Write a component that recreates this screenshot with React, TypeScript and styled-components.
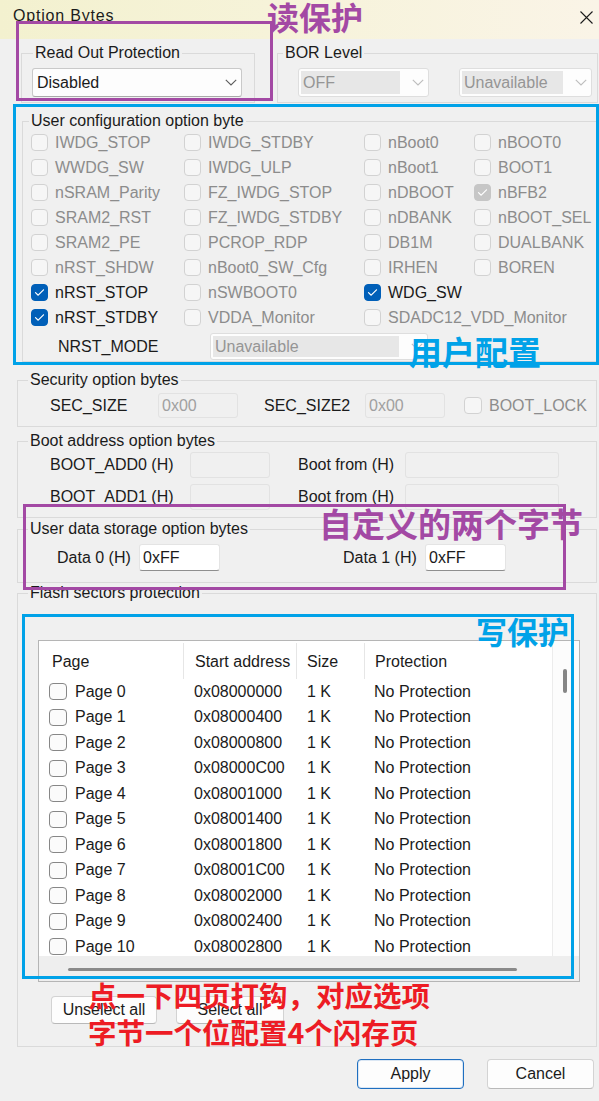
import React from 'react'
import styled, { createGlobalStyle } from 'styled-components'

const PURPLE = '#a349a4'
const BLUE = '#00a2e8'
const RED = '#ed1c24'

const GlobalStyle = createGlobalStyle`
  * { box-sizing: border-box; }
  html, body { margin: 0; padding: 0; background: #f0f0f0; }
  body {
    font-family: "Liberation Sans", Arial, sans-serif;
    font-size: 16px;
    color: #1b1b1b;
  }
`

const Window = styled.div`
  position: relative;
  width: 599px;
  height: 1101px;
  overflow: hidden;
  background: #f0f0f0;
`

const TitleBar = styled.header`
  display: flex;
  align-items: flex-start;
  justify-content: space-between;
  height: 39px;
  padding: 7px 6px 0 13px;
  background: linear-gradient(90deg, #f3f1cf 0%, #f6f3d9 45%, #faf4e7 100%);
`

const Title = styled.span`
  line-height: 18px;
  letter-spacing: 0.8px;
`

const CloseIcon = styled.svg`
  margin-top: 4px;
  width: 13px;
  height: 13px;
`

const Body = styled.main`
  display: flex;
  flex-direction: column;
  padding: 5px 2px 0 17px;
`

const TopRow = styled.div`
  display: flex;
  gap: 22px;
  padding-left: 4px;
`

const Group = styled.fieldset<{ $w?: number; $mt?: number; $ml?: number; $pb: number }>`
  flex: none;
  width: ${p => (p.$w ? `${p.$w}px` : 'auto')};
  min-width: 0;
  margin: ${p => p.$mt ?? 0}px 0 0 ${p => p.$ml ?? 0}px;
  padding: 0 0 ${p => p.$pb}px;
  border: 1px solid #dadada;
`

const Legend = styled.legend<{ $lx: number }>`
  margin-left: ${p => p.$lx}px;
  padding: 0 2px;
  line-height: 18px;
`

const ComboRow = styled.div<{ $pl: number; $gap?: number }>`
  display: flex;
  gap: ${p => p.$gap ?? 0}px;
  margin-top: 6px;
  padding-left: ${p => p.$pl}px;
`

const Combo = styled.div<{ $w: number; $h?: number; $dim?: boolean }>`
  flex: none;
  display: flex;
  align-items: stretch;
  width: ${p => p.$w}px;
  height: ${p => p.$h ?? 29}px;
  padding: 2px 4px 2px 2px;
  border: 1px solid ${p => (p.$dim ? '#dedede' : '#c9c9c9')};
  border-bottom-color: ${p => (p.$dim ? '#dedede' : '#a9a9a9')};
  border-radius: 3px;
  background: #fdfdfd;
`

const ComboText = styled.span<{ $dim?: boolean }>`
  flex: 1;
  display: flex;
  align-items: center;
  padding-left: 2px;
  background: ${p => (p.$dim ? '#e7e7e7' : 'transparent')};
  color: ${p => (p.$dim ? '#959595' : '#1b1b1b')};
  white-space: nowrap;
  overflow: hidden;
`

const Chevron = styled.svg<{ $dim?: boolean }>`
  flex: none;
  align-self: center;
  width: 12px;
  height: 7px;
  margin-left: 12px;
  stroke: ${p => (p.$dim ? '#bdbdbd' : '#5c5c5c')};
`

const ConfigGrid = styled.div`
  display: grid;
  grid-template-columns: 153px 180px 110px 1fr;
  grid-auto-rows: 25px;
  padding-left: 8px;
`

const Option = styled.label<{ $dim?: boolean; $ml?: number }>`
  display: flex;
  align-items: center;
  gap: 7px;
  margin-left: ${p => p.$ml ?? 0}px;
  white-space: nowrap;
  color: ${p => (p.$dim ? '#8c8c8c' : '#1b1b1b')};
`

const Box = styled.span<{ $on?: boolean; $dim?: boolean; $wide?: boolean }>`
  flex: none;
  display: inline-flex;
  align-items: center;
  justify-content: center;
  width: ${p => (p.$wide ? 18 : 17)}px;
  height: 17px;
  border-radius: 4px;
  border: 1px solid ${p => (p.$on ? (p.$dim ? '#c6c6c6' : '#005fb8') : p.$dim ? '#d2d2d2' : '#878787')};
  background: ${p => (p.$on ? (p.$dim ? '#c6c6c6' : '#005fb8') : p.$dim ? '#f6f6f6' : '#fbfbfb')};
`

const ModeRow = styled.div`
  display: flex;
  align-items: center;
  margin-top: 3px;
  padding-left: 35px;
`

const FieldRow = styled.div<{ $mt: number; $pl: number }>`
  display: flex;
  align-items: center;
  margin-top: ${p => p.$mt}px;
  padding-left: ${p => p.$pl}px;
`

const FieldLabel = styled.span<{ $w: number; $ml?: number }>`
  flex: none;
  width: ${p => p.$w}px;
  margin-left: ${p => p.$ml ?? 0}px;
  white-space: nowrap;
`

const TextField = styled.div<{ $w: number; $h: number; $dim?: boolean }>`
  flex: none;
  display: flex;
  align-items: center;
  width: ${p => p.$w}px;
  height: ${p => p.$h}px;
  padding-left: 3px;
  border: 1px solid ${p => (p.$dim ? '#e2e2e2' : '#e4e4e4')};
  border-bottom-color: ${p => (p.$dim ? '#e2e2e2' : '#8e8e8e')};
  border-radius: 3px;
  background: ${p => (p.$dim ? '#f0f0f0' : '#ffffff')};
  color: ${p => (p.$dim ? '#a0a0a0' : '#1b1b1b')};
`

const List = styled.div`
  display: flex;
  flex-direction: column;
  width: 542px;
  height: 342px;
  margin: 38px 0 0 20px;
  border: 1px solid #b5b5b5;
  background: #ffffff;
`

const ListMain = styled.div`
  display: flex;
  flex: 1;
  min-height: 0;
`

const Table = styled.div`
  flex: 1;
  overflow: hidden;
`

const HeaderRow = styled.div`
  display: grid;
  grid-template-columns: 145px 113px 68px 1fr;
  height: 38px;
  padding-top: 2px;
`

const HeaderCell = styled.div<{ $pl: number }>`
  padding: 10px 0 0 ${p => p.$pl}px;
  line-height: 18px;
  border-right: 1px solid #e6e6e6;
  white-space: nowrap;

  &:last-child {
    border-right: none;
  }
`

const Row = styled.div`
  display: grid;
  grid-template-columns: 145px 113px 68px 1fr;
  height: 25.5px;
  align-items: center;
`

const Cell = styled.div<{ $pl: number }>`
  display: flex;
  align-items: center;
  gap: 8px;
  padding-left: ${p => p.$pl}px;
  white-space: nowrap;
`

const VScroll = styled.div`
  flex: none;
  width: 27px;
  padding: 28px 0 0 10px;
  background: #fcfcfc;
  border-left: 1px solid #ececec;
`

const VThumb = styled.div`
  width: 4px;
  height: 24px;
  border-radius: 2px;
  background: #868686;
`

const HScroll = styled.div`
  flex: none;
  height: 25px;
  padding: 12px 0 0 29px;
  background: #eeeeee;
`

const HThumb = styled.div`
  width: 449px;
  height: 3px;
  border-radius: 2px;
  background: #8a8a8a;
`

const ButtonRow = styled.div<{ $mt: number; $gap: number; $end?: boolean }>`
  display: flex;
  justify-content: ${p => (p.$end ? 'flex-end' : 'flex-start')};
  gap: ${p => p.$gap}px;
  margin-top: ${p => p.$mt}px;
  padding: ${p => (p.$end ? '0 3px 0 0' : '0 0 0 33px')};
`

const Button = styled.button<{ $w: number; $h: number; $primary?: boolean }>`
  width: ${p => p.$w}px;
  height: ${p => p.$h}px;
  padding: 0;
  font: inherit;
  color: #1b1b1b;
  background: #fdfdfd;
  border: 1px solid ${p => (p.$primary ? '#1f6fc0' : '#d3d3d3')};
  border-bottom-color: ${p => (p.$primary ? '#1f6fc0' : '#b9b9b9')};
  border-radius: 4px;
  box-shadow: ${p => (p.$primary ? 'inset 0 0 0 1px #dbe7f4' : 'none')};
`

const Frame = styled.div<{ $x: number; $y: number; $w: number; $h: number; $color: string }>`
  position: absolute;
  left: ${p => p.$x}px;
  top: ${p => p.$y}px;
  width: ${p => p.$w}px;
  height: ${p => p.$h}px;
  border: 3px solid ${p => p.$color};
  pointer-events: none;
`

const Note = styled.div<{ $x: number; $y: number; $size: number; $lh?: number; $color: string }>`
  position: absolute;
  left: ${p => p.$x}px;
  top: ${p => p.$y}px;
  font-family: "Noto Sans CJK SC", "Liberation Sans", sans-serif;
  font-weight: 700;
  font-size: ${p => p.$size}px;
  line-height: ${p => p.$lh ?? p.$size}px;
  color: ${p => p.$color};
  white-space: nowrap;
  pointer-events: none;
`

type Opt = { label: string; on?: boolean; live?: boolean } | null

const configRows: Opt[][] = [
  [{ label: 'IWDG_STOP' }, { label: 'IWDG_STDBY' }, { label: 'nBoot0' }, { label: 'nBOOT0' }],
  [{ label: 'WWDG_SW' }, { label: 'IWDG_ULP' }, { label: 'nBoot1' }, { label: 'BOOT1' }],
  [{ label: 'nSRAM_Parity' }, { label: 'FZ_IWDG_STOP' }, { label: 'nDBOOT' }, { label: 'nBFB2', on: true }],
  [{ label: 'SRAM2_RST' }, { label: 'FZ_IWDG_STDBY' }, { label: 'nDBANK' }, { label: 'nBOOT_SEL' }],
  [{ label: 'SRAM2_PE' }, { label: 'PCROP_RDP' }, { label: 'DB1M' }, { label: 'DUALBANK' }],
  [{ label: 'nRST_SHDW' }, { label: 'nBoot0_SW_Cfg' }, { label: 'IRHEN' }, { label: 'BOREN' }],
  [{ label: 'nRST_STOP', on: true, live: true }, { label: 'nSWBOOT0' }, { label: 'WDG_SW', on: true, live: true }, null],
  [{ label: 'nRST_STDBY', on: true, live: true }, { label: 'VDDA_Monitor' }, { label: 'SDADC12_VDD_Monitor' }, null],
]

const pages = Array.from({ length: 11 }, (_, i) => ({
  name: `Page ${i}`,
  address: '0x' + (0x08000000 + i * 0x400).toString(16).toUpperCase().padStart(8, '0'),
}))

const Check = ({ on, dim, wide }: { on?: boolean; dim?: boolean; wide?: boolean }) => (
  <Box $on={on} $dim={dim} $wide={wide}>
    {on && (
      <svg width="11" height="9" viewBox="0 0 11 9" fill="none">
        <path d="M1.5 4.6 L4.2 7.2 L9.5 1.8" stroke="#ffffff" strokeWidth="1.2" strokeLinecap="round" strokeLinejoin="round" />
      </svg>
    )}
  </Box>
)

const Select = ({ value, w, h, dim }: { value: string; w: number; h?: number; dim?: boolean }) => (
  <Combo $w={w} $h={h} $dim={dim}>
    <ComboText $dim={dim}>{value}</ComboText>
    <Chevron $dim={dim} viewBox="0 0 12 7" fill="none" strokeWidth="1.1">
      <path d="M0.8 0.8 L6 6 L11.2 0.8" />
    </Chevron>
  </Combo>
)

export default function App() {
  return (
    <Window>
      <GlobalStyle />
      <TitleBar>
        <Title>Option Bytes</Title>
        <CloseIcon viewBox="0 0 13 13" fill="none" stroke="#1b1b1b" strokeWidth="1.1">
          <path d="M0.5 0.5 L12.5 12.5 M12.5 0.5 L0.5 12.5" />
        </CloseIcon>
      </TitleBar>

      <Body>
        <TopRow>
          <Group $w={234} $pb={5}>
            <Legend $lx={11}>Read Out Protection</Legend>
            <ComboRow $pl={10}>
              <Select value="Disabled" w={210} />
            </ComboRow>
          </Group>
          <Group $w={321} $pb={5}>
            <Legend $lx={5}>BOR Level</Legend>
            <ComboRow $pl={20} $gap={30}>
              <Select value="OFF" w={131} dim />
              <Select value="Unavailable" w={133} dim />
            </ComboRow>
          </Group>
        </TopRow>

        <Group $mt={9} $ml={5} $pb={1}>
          <Legend $lx={6}>User configuration option byte</Legend>
          <ConfigGrid>
            {configRows.flatMap((row, r) =>
              row.map((opt, c) =>
                opt ? (
                  <Option key={`${r}-${c}`} $dim={!opt.live}>
                    <Check on={opt.on} dim={!opt.live} />
                    {opt.label}
                  </Option>
                ) : (
                  <span key={`${r}-${c}`} />
                ),
              ),
            )}
          </ConfigGrid>
          <ModeRow>
            <FieldLabel $w={152}>NRST_MODE</FieldLabel>
            <Select value="Unavailable" w={218} h={27} dim />
          </ModeRow>
        </Group>

        <Group $mt={9} $pb={8}>
          <Legend $lx={10}>Security option bytes</Legend>
          <FieldRow $mt={4} $pl={32}>
            <FieldLabel $w={108}>SEC_SIZE</FieldLabel>
            <TextField $w={80} $h={25} $dim>0x00</TextField>
            <FieldLabel $w={101} $ml={26}>SEC_SIZE2</FieldLabel>
            <TextField $w={80} $h={25} $dim>0x00</TextField>
            <Option $dim $ml={19}>
              <Check dim wide />
              BOOT_LOCK
            </Option>
          </FieldRow>
        </Group>

        <Group $mt={5} $pb={7}>
          <Legend $lx={10}>Boot address option bytes</Legend>
          <FieldRow $mt={2} $pl={32}>
            <FieldLabel $w={140}>BOOT_ADD0 (H)</FieldLabel>
            <TextField $w={80} $h={26} $dim />
            <FieldLabel $w={107} $ml={28}>Boot from (H)</FieldLabel>
            <TextField $w={154} $h={26} $dim />
          </FieldRow>
          <FieldRow $mt={6} $pl={32}>
            <FieldLabel $w={140}>BOOT_ADD1 (H)</FieldLabel>
            <TextField $w={80} $h={26} $dim />
            <FieldLabel $w={107} $ml={28}>Boot from (H)</FieldLabel>
            <TextField $w={154} $h={26} $dim />
          </FieldRow>
        </Group>

        <Group $mt={2} $pb={11}>
          <Legend $lx={10}>User data storage option bytes</Legend>
          <FieldRow $mt={6} $pl={39}>
            <FieldLabel $w={82}>Data 0 (H)</FieldLabel>
            <TextField $w={81} $h={27}>0xFF</TextField>
            <FieldLabel $w={82} $ml={123}>Data 1 (H)</FieldLabel>
            <TextField $w={81} $h={27}>0xFF</TextField>
          </FieldRow>
        </Group>

        <Group $mt={1} $pb={22}>
          <Legend $lx={10}>Flash sectors protection</Legend>
          <List>
            <ListMain>
              <Table>
                <HeaderRow>
                  <HeaderCell $pl={13}>Page</HeaderCell>
                  <HeaderCell $pl={11}>Start address</HeaderCell>
                  <HeaderCell $pl={10}>Size</HeaderCell>
                  <HeaderCell $pl={10}>Protection</HeaderCell>
                </HeaderRow>
                {pages.map(p => (
                  <Row key={p.name}>
                    <Cell $pl={10}>
                      <Check wide />
                      {p.name}
                    </Cell>
                    <Cell $pl={10}>{p.address}</Cell>
                    <Cell $pl={10}>1 K</Cell>
                    <Cell $pl={9}>No Protection</Cell>
                  </Row>
                ))}
              </Table>
              <VScroll>
                <VThumb />
              </VScroll>
            </ListMain>
            <HScroll>
              <HThumb />
            </HScroll>
          </List>
          <ButtonRow $mt={14} $gap={19}>
            <Button $w={106} $h={28}>Unselect all</Button>
            <Button $w={108} $h={28}>Select all</Button>
          </ButtonRow>
        </Group>

        <ButtonRow $mt={12} $gap={23} $end>
          <Button $w={107} $h={30} $primary>Apply</Button>
          <Button $w={107} $h={30}>Cancel</Button>
        </ButtonRow>
      </Body>

      <Frame $x={16} $y={21} $w={257} $h={80} $color={PURPLE} />
      <Frame $x={13} $y={104} $w={586} $h={261} $color={BLUE} />
      <Frame $x={23} $y={504} $w={543} $h={86} $color={PURPLE} />
      <Frame $x={22} $y={614} $w={552} $h={365} $color={BLUE} />

      <Note $x={267} $y={0} $size={32} $color={PURPLE}>读保护</Note>
      <Note $x={409} $y={335} $size={33} $color={BLUE}>用户配置</Note>
      <Note $x={319} $y={507} $size={33} $color={PURPLE}>自定义的两个字节</Note>
      <Note $x={476} $y={615} $size={31} $color={BLUE}>写保护</Note>
      <Note $x={88} $y={976} $size={28.5} $lh={37} $color={RED}>
        点一下四页打钩，对应选项
        <br />
        字节一个位配置4个闪存页
      </Note>
    </Window>
  )
}
